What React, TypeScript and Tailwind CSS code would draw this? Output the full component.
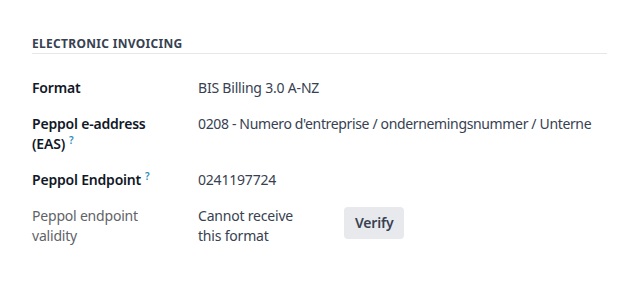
const font = { fontFamily: '"Noto Sans", "Open Sans", sans-serif' };

const Help = () => <sup className="ml-1 text-[10px] font-semibold text-[#2f8fb8]">?</sup>;

export default function App() {
  return (
    <div className="h-[304px] w-[621px] bg-white text-[14px] leading-[20px] tracking-[-0.2px] text-[#374151]" style={font}>
      <div className="pl-[32px] pr-[14px] pt-[36px]">
        <div className="border-b border-[#e5e7eb] pb-[1px] text-[12px] font-bold uppercase leading-[16px] tracking-[0.3px] text-[#374151]">
          Electronic Invoicing
        </div>

        <div className="mt-[24px] flex flex-col gap-[16px]">
          <div className="flex">
            <div className="w-[166px] shrink-0 font-semibold text-[#111827]">Format</div>
            <div>BIS Billing 3.0 A-NZ</div>
          </div>

          <div className="flex">
            <div className="w-[166px] shrink-0 font-semibold text-[#111827]">
              Peppol e-address
              <br />
              (EAS)
              <Help />
            </div>
            <div className="whitespace-nowrap tracking-[-0.35px]">
              0208 - Numero d'entreprise / ondernemingsnummer / Unterne
            </div>
          </div>

          <div className="flex">
            <div className="w-[166px] shrink-0 font-semibold text-[#111827]">
              Peppol Endpoint
              <Help />
            </div>
            <div>0241197724</div>
          </div>

          <div className="flex items-start">
            <div className="w-[166px] shrink-0 text-[#5f6368]">
              Peppol endpoint
              <br />
              validity
            </div>
            <div className="w-[146px] shrink-0">
              Cannot receive
              <br />
              this format
            </div>
            <button className="mt-[1px] h-[32px] rounded-[4px] bg-[#e7e9ed] px-[11px] font-semibold text-[#374151]">
              Verify
            </button>
          </div>
        </div>
      </div>
    </div>
  );
}
